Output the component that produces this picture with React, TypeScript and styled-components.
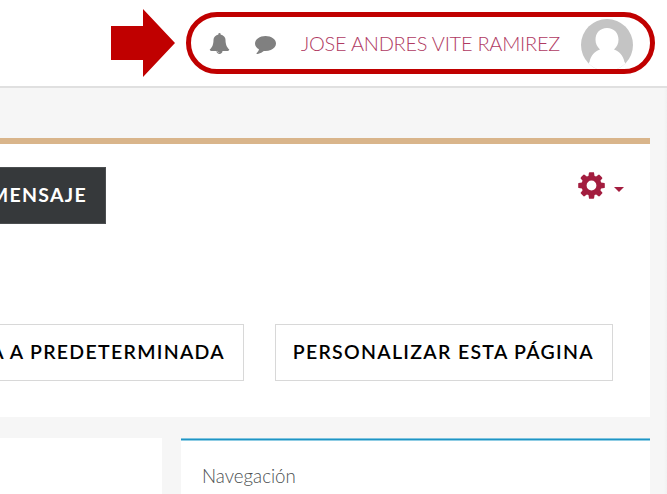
import React from "react";
import styled, { createGlobalStyle } from "styled-components";

const Global = createGlobalStyle`
  * { box-sizing: border-box; }
  body { margin: 0; background: #f6f6f6; font-family: Lato, "Open Sans", sans-serif; overflow: hidden; }
`;

const Page = styled.div`
  width: 667px;
  height: 494px;
  overflow: hidden;
  display: flex;
  flex-direction: column;
  background: linear-gradient(to right, #f6f6f6 664px, #f1f1f1 667px);
`;

const Header = styled.header`
  height: 88px;
  flex: none;
  display: flex;
  align-items: flex-start;
  padding: 9px 12px 0 111px;
  background: #fff;
  border-bottom: 2px solid #e0e0e0;
`;

const Arrow = styled.svg`
  width: 64px;
  height: 68px;
  flex: none;
  margin-right: 11px;
  fill: #c00000;
`;

const UserBar = styled.div`
  width: 469px;
  height: 62px;
  margin-top: 3px;
  padding: 0 17px 0 18px;
  display: flex;
  align-items: center;
  border: 5px solid #c00000;
  border-radius: 31px;
`;

const Icon = styled.svg<{ $size: number; $color: string }>`
  width: ${(p) => p.$size}px;
  height: ${(p) => p.$size}px;
  flex: none;
  display: block;
  fill: ${(p) => p.$color};
`;

const BarIcons = styled.div`
  display: flex;
  gap: 25px;
  width: 92px;
  flex: none;
`;

const UserName = styled.span`
  width: 280px;
  flex: none;
  color: #b03a62;
  font-size: 20px;
  font-weight: 300;
  line-height: 28px;
  letter-spacing: -0.25px;
  white-space: nowrap;
`;

const Avatar = styled.svg`
  width: 52px;
  height: 50px;
  flex: none;
  margin-top: 2px;
`;

const MainPanel = styled.section`
  width: 650px;
  height: 279px;
  margin-top: 50px;
  flex: none;
  background: #fff;
  border-top: 6px solid #d9b58b;
  display: flex;
  flex-direction: column;
`;

const TopRow = styled.div`
  height: 80px;
  display: flex;
  justify-content: space-between;
  align-items: flex-start;
  padding: 23px 26px 0 0;
`;

const Button = styled.button<{ $width: number; $dark?: boolean }>`
  width: ${(p) => p.$width}px;
  height: 57px;
  flex: none;
  display: flex;
  align-items: center;
  justify-content: flex-end;
  padding: 0 18px 1px 0;
  border: ${(p) => (p.$dark ? "1px solid #4b4e50" : "1px solid #d8d8d8")};
  background: ${(p) => (p.$dark ? "#36393b" : "#fff")};
  color: ${(p) => (p.$dark ? "#fff" : "#000")};
  font: ${(p) => (p.$dark ? 700 : 600)} 19.5px/28px Lato, "Open Sans", sans-serif;
  letter-spacing: 1.3px;
  white-space: nowrap;
`;

const OpenLeftButton = styled(Button)`
  border-left: 0;
`;

const Settings = styled.div`
  display: flex;
  align-items: center;
  gap: 7px;
  margin-top: 3px;
`;

const Caret = styled.span`
  margin-top: 7px;
  border: 5px solid transparent;
  border-top-color: #a31d3f;
  border-bottom: 0;
`;

const ActionRow = styled.div`
  display: flex;
  gap: 31px;
  margin-top: 100px;
`;

const BlockRow = styled.div`
  display: flex;
  gap: 19px;
  margin-top: 21px;
  flex: 1;
`;

const Block = styled.section<{ $width: number; $accent?: boolean }>`
  width: ${(p) => p.$width}px;
  background: ${(p) =>
    p.$accent
      ? "linear-gradient(#7fc4df 0 1px, #1f94c4 1px 2px, #90cde4 2px 3px, #fff 3px)"
      : "#fff"};
  padding: 24px 21px 0;
`;

const BlockTitle = styled.h2`
  margin: 0;
  color: #4c4f51;
  font-size: 18.7px;
  font-weight: 300;
  line-height: 28px;
`;

const BELL =
  "M912 1696q0-16-16-16-59 0-101.500-42.500t-42.500-101.500q0-16-16-16t-16 16q0 73 51.500 124.500t124.500 51.500q16 0 16-16zm816-288q0 52-38 90t-90 38h-448q0 106-75 181t-181 75-181-75-75-181h-448q-52 0-90-38t-38-90q50-42 91-88t85-119.500 74.500-158.500 50-206 19.500-260q0-152 117-282.500t307-158.500q-8-19-8-39 0-40 28-68t68-28 68 28 28 68q0 20-8 39 190 28 307 158.500t117 282.500q0 139 19.500 260t50 206 74.500 158.500 85 119.500 91 88z";
const COMMENT =
  "M1792 896q0 174-120 321.500t-326 233-450 85.500q-70 0-145-8-198 175-460 242-49 14-114 22h-5q-15 0-27-10.5t-16-27.500v-1q-3-4-.5-12t2-10 4.500-9.500l6-9 7-8.500 8-9q7-8 31-34.500t34.500-38 31-39.500 32.500-51 27-59 26-76q-157-89-247.500-220t-90.500-281q0-130 71-248.500t191-204.500 286-136.500 348-50.500 348 50.500 286 136.500 191 204.500 71 248.500z";
const GEAR =
  "M1180 896q0-118-83-201t-201-83-201 83-83 201 83 201 201 83 201-83 83-201zm484-109v222q0 12-8 23t-20 13l-185 28q-19 54-39 91 35 50 107 138 10 12 10 25t-9 23q-27 37-99 108t-94 71q-12 0-26-9l-138-108q-44 23-91 38-16 136-29 186-7 28-36 28h-222q-14 0-24.500-8.500t-11.500-21.500l-28-184q-49-16-90-37l-141 107q-10 9-25 9-14 0-25-11-126-114-165-168-7-10-7-23 0-12 8-23 15-21 51-66.500t54-70.500q-27-50-41-99l-183-27q-13-2-21-12.500t-8-23.500v-222q0-12 8-23t19-13l186-28q14-46 39-92-40-57-107-138-10-12-10-24 0-10 9-23 26-36 98.500-107.500t94.500-71.500q13 0 26 10l138 107q44-23 91-38 16-136 29-186 7-28 36-28h222q14 0 24.500 8.500t11.500 21.500l28 184q49 16 90 37l142-107q9-9 24-9 13 0 25 10 129 119 165 170 7 8 7 22 0 12-8 23-15 21-51 66.500t-54 70.500q26 50 41 98l183 28q13 2 21 12.500t8 23.500z";

export default function App() {
  return (
    <Page>
      <Global />
      <Header>
        <Arrow viewBox="0 0 64 68">
          <path d="M0 17H32V0L64 34L32 68V51H0Z" />
        </Arrow>
        <UserBar>
          <BarIcons>
            <Icon $size={21} $color="#808080" viewBox="0 0 1792 1792"><path d={BELL} /></Icon>
            <Icon $size={21} $color="#808080" viewBox="0 0 1792 1792"><path d={COMMENT} /></Icon>
          </BarIcons>
          <UserName>JOSE ANDRES VITE RAMIREZ</UserName>
          <Avatar viewBox="0 0 52 50">
            <defs>
              <clipPath id="avatar-circle"><circle cx="26" cy="26" r="26" /></clipPath>
            </defs>
            <g clipPath="url(#avatar-circle)">
              <rect width="52" height="52" fill="#c4c4c4" />
              <path
                fill="#fff"
                d="M26 9C19 9 14.500 14 14.500 20.500C14.500 25 16 27.500 19 30.500C14 32 9.500 37 8.500 43L6 46V52H46V46L43.500 43C42.500 37 38 32 33 30.500C36 27.500 37.500 25 37.500 20.500C37.500 14 33 9 26 9Z"
              />
            </g>
          </Avatar>
        </UserBar>
      </Header>
      <MainPanel>
        <TopRow>
          <OpenLeftButton $width={106} $dark>MENSAJE</OpenLeftButton>
          <Settings>
            <Icon $size={31} $color="#a31d3f" viewBox="0 0 1792 1792"><path d={GEAR} /></Icon>
            <Caret />
          </Settings>
        </TopRow>
        <ActionRow>
          <OpenLeftButton $width={244}>A A PREDETERMINADA</OpenLeftButton>
          <Button $width={338}>PERSONALIZAR ESTA PÁGINA</Button>
        </ActionRow>
      </MainPanel>
      <BlockRow>
        <Block $width={162} />
        <Block $width={469} $accent>
          <BlockTitle>Navegación</BlockTitle>
        </Block>
      </BlockRow>
    </Page>
  );
}
